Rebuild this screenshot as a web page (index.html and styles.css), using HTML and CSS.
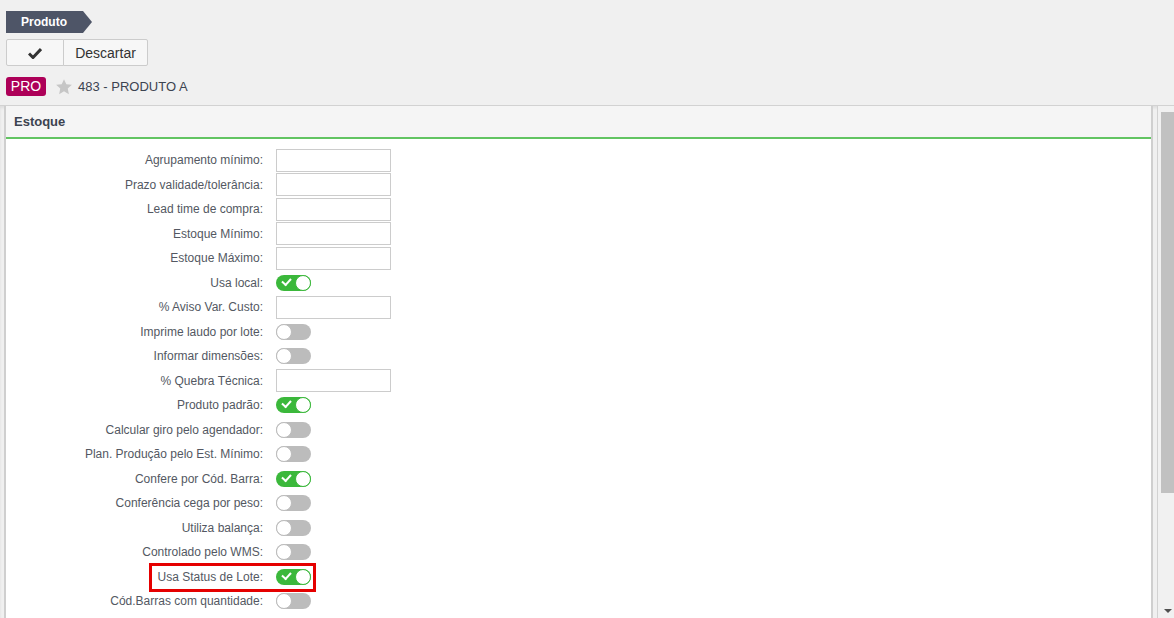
FILE: index.html
```
<!DOCTYPE html>
<html>

<head>
    <meta charset="UTF-8">
    <link rel="stylesheet" href="styles.css">
    <title>Produto</title>
</head>

<body>
    <div class="topbar">
        <div class="crumb">Produto</div>
        <div class="btn-group">
            <button class="btn btn-save">
                <svg width="14" height="12" viewBox="0 0 14 12"><path d="M1 6.5 L5 10.5 L13 2" fill="none" stroke="#333" stroke-width="3"/></svg>
            </button>
            <button class="btn btn-text">Descartar</button>
        </div>
        <div class="title-row">
            <span class="badge">PRO</span>
            <svg class="star" width="18" height="18" viewBox="0 0 24 24"><path d="M12 1.5 L15.1 8.3 L22.5 9.1 L17 14.1 L18.5 21.5 L12 17.7 L5.5 21.5 L7 14.1 L1.5 9.1 L8.9 8.3 Z" fill="#c6c6c6"/></svg>
            <span class="title">483 - PRODUTO A</span>
        </div>
    </div>

    <div class="main">
        <div class="viewport">
            <div class="panel">
                <div class="panel-head">Estoque</div>
                <div class="form">
                    <div class="row"><label>Agrupamento mínimo:</label><input type="text"></div>
                    <div class="row"><label>Prazo validade/tolerância:</label><input type="text"></div>
                    <div class="row"><label>Lead time de compra:</label><input type="text"></div>
                    <div class="row"><label>Estoque Mínimo:</label><input type="text"></div>
                    <div class="row"><label>Estoque Máximo:</label><input type="text"></div>
                    <div class="row"><label>Usa local:</label><span class="switch on"><i></i></span></div>
                    <div class="row"><label>% Aviso Var. Custo:</label><input type="text"></div>
                    <div class="row"><label>Imprime laudo por lote:</label><span class="switch"><i></i></span></div>
                    <div class="row"><label>Informar dimensões:</label><span class="switch"><i></i></span></div>
                    <div class="row"><label>% Quebra Técnica:</label><input type="text"></div>
                    <div class="row"><label>Produto padrão:</label><span class="switch on"><i></i></span></div>
                    <div class="row"><label>Calcular giro pelo agendador:</label><span class="switch"><i></i></span></div>
                    <div class="row"><label>Plan. Produção pelo Est. Mínimo:</label><span class="switch"><i></i></span></div>
                    <div class="row"><label>Confere por Cód. Barra:</label><span class="switch on"><i></i></span></div>
                    <div class="row"><label>Conferência cega por peso:</label><span class="switch"><i></i></span></div>
                    <div class="row"><label>Utiliza balança:</label><span class="switch"><i></i></span></div>
                    <div class="row"><label>Controlado pelo WMS:</label><span class="switch"><i></i></span></div>
                    <div class="row"><label>Usa Status de Lote:</label><span class="switch on"><i></i></span><div class="highlight"></div></div>
                    <div class="row"><label>Cód.Barras com quantidade:</label><span class="switch"><i></i></span></div>
                </div>
            </div>
        </div>
        <div class="scrollbar">
            <div class="thumb"></div>
            <div class="arrow"></div>
        </div>
    </div>
</body>

</html>
```

FILE: styles.css
```
html, body {
    margin: 0;
    height: 100%;
    overflow: hidden;
}

body {
    background: #f0f0f0;
    font: 12px "Liberation Sans", Arial, Helvetica, sans-serif;
    color: #535862;
}

.topbar {
    height: 105px;
    box-sizing: border-box;
    padding: 11px 6px 0 6px;
}

.crumb {
    width: 86px;
    height: 22px;
    line-height: 22px;
    box-sizing: border-box;
    padding-left: 15px;
    background: #4e5567;
    color: #fff;
    font-weight: bold;
    font-size: 12px;
    clip-path: polygon(0 0, 77px 0, 100% 50%, 77px 100%, 0 100%);
}

.btn-group {
    display: flex;
    margin-top: 6px;
    height: 27px;
}

.btn {
    box-sizing: border-box;
    height: 27px;
    border: 1px solid #ccc;
    background: #f7f7f7;
    color: #333;
    font: 14px "Liberation Sans", Arial, sans-serif;
    padding: 0;
    display: flex;
    align-items: center;
    justify-content: center;
}

.btn-save {
    width: 58px;
    border-radius: 2px 0 0 2px;
}

.btn-text {
    width: 85px;
    margin-left: -1px;
    border-radius: 0 2px 2px 0;
}

.title-row {
    display: flex;
    align-items: center;
    margin-top: 11px;
    height: 19px;
}

.badge {
    background: #ad0058;
    color: #fff;
    font-size: 14px;
    height: 19px;
    line-height: 19px;
    padding: 0 4px;
    border-radius: 3px;
    width: 32px;
    text-align: center;
}

.star {
    margin-left: 9px;
    margin-right: 5px;
}

.title {
    font-size: 13px;
    color: #3c4350;
}

.main {
    display: flex;
    height: 513px;
    border-top: 1px solid #d2d2d2;
    box-shadow: inset 0 2px 3px rgba(0, 0, 0, 0.08);
}

.viewport {
    flex: 1;
    display: flex;
    padding-left: 4px;
    overflow: hidden;
}

.panel {
    flex: 1;
    background: #fff;
    border-left: 2px solid #cfcfcf;
    border-right: 2px solid #cfcfcf;
    margin-right: 4px;
}

.panel-head {
    height: 31px;
    line-height: 31px;
    padding-left: 8px;
    background: #f5f5f5;
    border-bottom: 2px solid #62c462;
    font-size: 13px;
    font-weight: bold;
    color: #3c4350;
}

.form {
    padding-top: 9px;
}

.row {
    position: relative;
    display: grid;
    grid-template-columns: 257px auto;
    column-gap: 13px;
    align-items: center;
    height: 24.5px;
}

.row label {
    text-align: right;
    white-space: nowrap;
}

.row input[type="text"] {
    box-sizing: border-box;
    width: 115px;
    height: 23px;
    border: 1px solid #ccc;
    background: #fff;
    outline: none;
    margin: 0;
}

.switch {
    position: relative;
    display: block;
    width: 35px;
    height: 16px;
    border-radius: 8px;
    background: #bcbcbc;
}

.switch i {
    position: absolute;
    top: 0;
    left: 0;
    width: 14px;
    height: 14px;
    border-radius: 50%;
    background: #fff;
    border: 1px solid #bcbcbc;
}

.switch.on {
    background: #3bb83b;
}

.switch.on i {
    left: auto;
    right: 0;
    border-color: #3bb83b;
}

.switch.on::before {
    content: "";
    position: absolute;
    left: 6px;
    top: 3px;
    width: 7px;
    height: 4px;
    border-left: 2px solid #fff;
    border-bottom: 2px solid #fff;
    transform: rotate(-48deg);
}

.highlight {
    position: absolute;
    left: 143px;
    top: -2px;
    width: 167px;
    height: 29px;
    box-sizing: border-box;
    border: 3px solid #e50000;
}

.scrollbar {
    width: 13px;
    border-left: 1px solid #d2d2d2;
    padding-left: 3px;
    padding-top: 6px;
    background: #f1f1f1;
    position: relative;
}

.thumb {
    height: 381px;
    background: #c1c1c1;
}

.arrow {
    position: absolute;
    left: 6px;
    bottom: 6px;
    width: 0;
    height: 0;
    border-left: 4px solid transparent;
    border-right: 4px solid transparent;
    border-top: 4px solid #505050;
}
```
